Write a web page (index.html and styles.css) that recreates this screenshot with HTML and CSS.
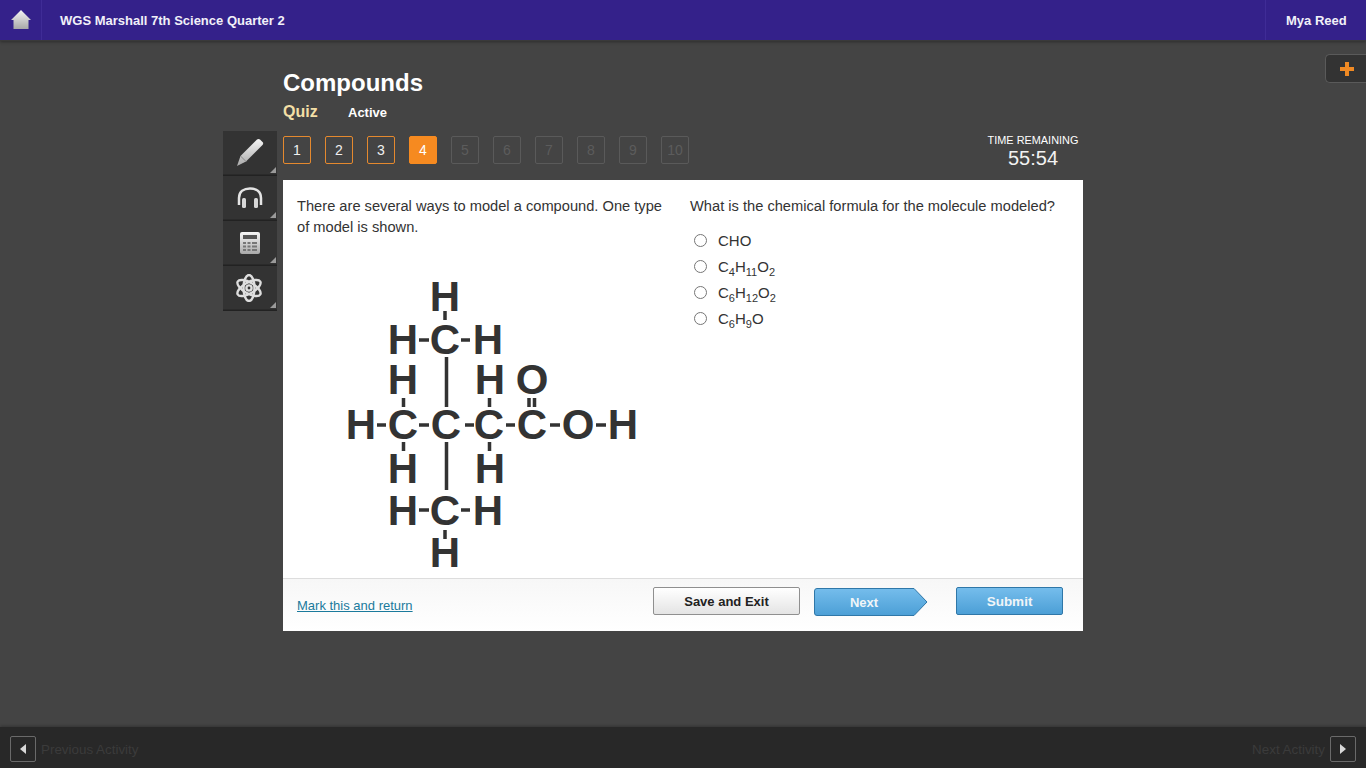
FILE: index.html
```html
<!DOCTYPE html>
<html lang="en">
<head>
<meta charset="utf-8">
<title>Compounds</title>
<link rel="stylesheet" href="styles.css">
</head>
<body>
<header class="topbar">
  <a class="home" aria-label="Home">
    <svg width="22" height="20" viewBox="0 0 22 20">
      <defs><linearGradient id="hg" x1="0" y1="0" x2="0" y2="1"><stop offset="0" stop-color="#f4f4f4"/><stop offset="1" stop-color="#a8a8a8"/></linearGradient></defs>
      <path d="M11 0 L21 10 L18.500 10 L18.500 19 L3.500 19 L3.500 10 L1 10 Z" fill="url(#hg)"/>
    </svg>
  </a>
  <div class="course">WGS Marshall 7th Science Quarter 2</div>
  <div class="user">Mya Reed</div>
</header>

<main class="stage">
  <aside class="tools">
    <div class="tool">
      <svg width="28" height="30" viewBox="0 0 28 30">
        <defs><linearGradient id="tg" x1="0" y1="0" x2="0" y2="1"><stop offset="0" stop-color="#f6f6f6"/><stop offset="1" stop-color="#a9a9a9"/></linearGradient></defs>
        <path d="M21 1.500 Q22.500 .5 24 1.500 L27 4.500 Q27.500 6 26.500 7 L10 23.500 L1 28 L4.500 18 Z" fill="url(#tg)"/>
        <path d="M4.500 18 L10 23.500" stroke="#8a8a8a" stroke-width="1" fill="none"/>
      </svg>
    </div>
    <div class="tool">
      <svg width="28" height="26" viewBox="0 0 28 26">
        <path d="M3 20 V13 C3 6.500 8 3.500 14 3.500 C20 3.500 25 6.500 25 13 V20" fill="none" stroke="#e4e4e4" stroke-width="2.500"/>
        <rect x="6" y="13" width="4" height="10" rx="1.500" fill="#d8d8d8"/>
        <rect x="18" y="13" width="4" height="10" rx="1.500" fill="#d8d8d8"/>
      </svg>
    </div>
    <div class="tool">
      <svg width="24" height="24" viewBox="0 0 24 24">
        <rect x="2" y="1" width="20" height="22" rx="2" fill="url(#tg)"/>
        <rect x="5" y="4" width="14" height="4" fill="#555"/>
        <path d="M5 11h3v2H5zM9.500 11h3v2h-3zM14 11h5v2h-5zM5 14.500h3v2H5zM9.500 14.500h3v2h-3zM14 14.500h5v2h-5zM5 18h3v2H5zM9.500 18h3v2h-3zM14 18h5v2h-5z" fill="#777"/>
      </svg>
    </div>
    <div class="tool">
      <svg width="28" height="28" viewBox="0 0 28 28" fill="none" stroke="#dedede" stroke-width="2.400">
        <ellipse cx="13" cy="14" rx="5.500" ry="13"/>
        <ellipse cx="13" cy="14" rx="5.500" ry="13" transform="rotate(60 13 14)"/>
        <ellipse cx="13" cy="14" rx="5.500" ry="13" transform="rotate(120 13 14)"/>
        <circle cx="13" cy="14" r="2.600" fill="#333"/>
      </svg>
    </div>
  </aside>

  <section class="activity">
    <h1 class="title">Compounds</h1>
    <div class="meta"><span class="kind">Quiz</span><span class="status">Active</span></div>
    <div class="progress">
      <nav class="steps">
        <span class="step done">1</span>
        <span class="step done">2</span>
        <span class="step done">3</span>
        <span class="step current">4</span>
        <span class="step">5</span>
        <span class="step">6</span>
        <span class="step">7</span>
        <span class="step">8</span>
        <span class="step">9</span>
        <span class="step">10</span>
      </nav>
      <div class="timer">
        <div class="timer-label">TIME REMAINING</div>
        <div class="timer-value">55:54</div>
      </div>
    </div>

    <div class="card">
      <div class="columns">
        <div class="col-left">
          <p class="prompt">There are several ways to model a compound. One type of model is shown.</p>
          <svg class="molecule" width="310" height="310" viewBox="340 270 310 310">
            <g class="atoms" text-anchor="middle">
              <text x="445" y="311">H</text>
              <text x="403" y="354">H</text><text x="445" y="354">C</text><text x="488" y="354">H</text>
              <text x="403" y="394">H</text><text x="490" y="394">H</text><text x="532" y="394">O</text>
              <text x="361" y="439">H</text><text x="403" y="439">C</text><text x="446" y="439">C</text><text x="489" y="439">C</text><text x="532" y="439">C</text><text x="578" y="439">O</text><text x="623" y="439">H</text>
              <text x="403" y="483">H</text><text x="490" y="483">H</text>
              <text x="403" y="525">H</text><text x="445" y="525">C</text><text x="488" y="525">H</text>
              <text x="445" y="567">H</text>
            </g>
            <g class="bonds">
              <path d="M445 311V320M446.500 357V407M446.500 442V490M445 530V539"/>
              <path d="M403.500 398V407M403.500 442V451M489.500 398V407M489.500 442V451"/>
              <path d="M529 398V407M534.500 398V407"/>
              <path d="M419 340H429M461 340H470M419 510H429M461 510H470"/>
              <path d="M377 425H386M419 425H429M465 425H474M506 425H515M550 425H560M596 425H606"/>
            </g>
          </svg>
        </div>
        <div class="col-right">
          <p class="prompt">What is the chemical formula for the molecule modeled?</p>
          <ul class="answers">
            <li class="answer"><input class="radio" type="radio" name="a"><label>CHO</label></li>
            <li class="answer"><input class="radio" type="radio" name="a"><label>C<sub>4</sub>H<sub>11</sub>O<sub>2</sub></label></li>
            <li class="answer"><input class="radio" type="radio" name="a"><label>C<sub>6</sub>H<sub>12</sub>O<sub>2</sub></label></li>
            <li class="answer"><input class="radio" type="radio" name="a"><label>C<sub>6</sub>H<sub>9</sub>O</label></li>
          </ul>
        </div>
      </div>
      <div class="card-foot">
        <a class="mark">Mark this and return</a>
        <div class="actions">
          <button class="btn btn-plain">Save and Exit</button>
          <button class="btn-next">
            <svg class="next-shape" width="114" height="28" viewBox="0 0 114 28">
              <defs><linearGradient id="bg" x1="0" y1="0" x2="0" y2="1"><stop offset="0" stop-color="#75bdec"/><stop offset="1" stop-color="#4c9fd6"/></linearGradient></defs>
              <path d="M3 .5 H100 L113 14 L100 27.500 H3 Q.5 27.500 .5 25 V3 Q.5 .5 3 .5 Z" fill="url(#bg)" stroke="#2f77a8"/>
            </svg>
            <span class="next-label">Next</span>
          </button>
          <button class="btn btn-blue">Submit</button>
        </div>
      </div>
    </div>
  </section>

  <aside class="side-right">
    <button class="plus" aria-label="Expand">
      <svg width="14" height="14" viewBox="0 0 14 14"><path d="M5 0h4v5h5v4H9v5H5V9H0V5h5z" fill="#f08a24"/></svg>
    </button>
  </aside>
</main>

<footer class="bottombar">
  <div class="nav-item">
    <span class="nav-btn"><svg width="8" height="10" viewBox="0 0 8 10"><path d="M7 0V10L1 5Z" fill="#d8d8d8"/></svg></span>
    <span class="nav-text">Previous Activity</span>
  </div>
  <div class="nav-item">
    <span class="nav-text">Next Activity</span>
    <span class="nav-btn"><svg width="8" height="10" viewBox="0 0 8 10"><path d="M1 0V10L7 5Z" fill="#d8d8d8"/></svg></span>
  </div>
</footer>
</body>
</html>
```

FILE: styles.css
```css
* { box-sizing: border-box; }
html, body { height: 100%; }
body {
  margin: 0;
  height: 768px;
  overflow: hidden;
  display: flex;
  flex-direction: column;
  background: #444;
  color: #333;
  font-family: "Liberation Sans", Arial, sans-serif;
}

.topbar {
  flex: none;
  height: 41px;
  display: flex;
  align-items: stretch;
  background: #34218a;
  border-bottom: 1px solid #3a3a3a;
  box-shadow: 0 1px 3px rgba(0,0,0,.35);
  color: #f1f0f8;
  font-size: 13px;
  font-weight: bold;
}
.home {
  width: 42px;
  display: flex;
  align-items: center;
  justify-content: center;
  border-right: 1px solid #3f2c96;
}
.course { flex: 1; padding-left: 18px; line-height: 41px; }
.user {
  width: 101px;
  padding-left: 20px;
  line-height: 41px;
  border-left: 1px solid #3f2c96;
}

.stage {
  flex: 1;
  min-height: 0;
  display: grid;
  grid-template-columns: 1fr 800px 1fr;
}

.tools {
  justify-self: end;
  width: 54px;
  margin-right: 6px;
  margin-top: 90px;
}
.tool {
  position: relative;
  height: 45px;
  display: flex;
  align-items: center;
  justify-content: center;
  background: #333;
  border-bottom: 1px solid #222;
  box-shadow: inset 0 -1px 0 #2a2a2a;
}
.tool::after {
  content: "";
  position: absolute;
  right: 1px;
  bottom: 2px;
  border-style: solid;
  border-width: 0 0 6px 6px;
  border-color: transparent transparent #9a9a9a transparent;
}

.activity { min-width: 0; }
.title {
  margin: 28px 0 0;
  font-size: 24px;
  line-height: 28px;
  font-weight: bold;
  color: #fff;
}
.meta {
  display: flex;
  align-items: baseline;
  margin-top: 6px;
  height: 20px;
}
.kind { font-size: 16px; font-weight: bold; color: #f3dfa6; width: 65px; }
.status { font-size: 13px; font-weight: bold; color: #fff; }

.progress {
  display: flex;
  justify-content: space-between;
  height: 44px;
  margin-top: 13px;
}
.steps { display: flex; gap: 14px; }
.step {
  width: 28px;
  height: 28px;
  display: flex;
  align-items: center;
  justify-content: center;
  border: 1px solid #5a5a5a;
  border-radius: 2px;
  color: #5c5c5c;
  font-size: 14px;
}
.step.done { border-color: #e5892e; color: #f0f0f0; }
.step.current { background: #f68a20; border-color: #f68a20; color: #fff; }

.timer { width: 100px; margin-top: -3px; color: #fff; text-align: center; }
.timer-label { font-size: 10.900px; line-height: 14px; white-space: nowrap; }
.timer-value { font-size: 20px; line-height: 22px; color: #f2f2f2; }

.card { height: 451px; background: #fff; display: flex; flex-direction: column; }
.columns { flex: 1; min-height: 0; display: flex; padding: 16px 14px 0; }
.col-left { width: 393px; padding-right: 20px; }
.col-right { flex: 1; }
.prompt { margin: 0; font-size: 14.667px; line-height: 21px; color: #333; }
.left-gap { margin: 0; }
.molecule { display: block; margin: 32px 0 0 43px; }
.atoms text {
  font-family: "Liberation Sans", Arial, sans-serif;
  font-size: 42px;
  font-weight: bold;
  fill: #333;
}
.bonds path { fill: none; stroke: #333; stroke-width: 3.500; }

.answers { list-style: none; margin: 10px 0 0; padding: 0; }
.answer { display: flex; align-items: center; height: 26px; font-size: 15px; color: #333; }
.radio { width: 13px; height: 13px; margin: 3px 11px 3px 4px; flex: none; }
.answer sub { font-size: 11px; line-height: 0; vertical-align: -4px; }

.card-foot {
  flex: none;
  height: 53px;
  display: flex;
  align-items: center;
  justify-content: space-between;
  padding: 0 20px 0 14px;
  border-top: 1px solid #ddd;
  background: linear-gradient(#f7f7f7, #fff);
}
.mark { margin-top: 1px; font-size: 13px; color: #1a7a9c; text-decoration: underline; }
.actions { display: flex; align-items: flex-start; gap: 14px; margin-bottom: 7px; }
.btn {
  height: 28px;
  padding: 1px 0 0;
  border-radius: 2px;
  font-family: inherit;
  font-size: 13px;
  font-weight: bold;
}
.btn-plain {
  width: 147px;
  border: 1px solid #8f8f8f;
  background: linear-gradient(#fff, #e4e4e4);
  color: #222;
}
.btn-blue {
  width: 107px;
  margin-left: 14px;
  border: 1px solid #2f77a8;
  background: linear-gradient(#75bdec, #4c9fd6);
  color: #f0f5f8;
  font-size: 13.500px;
}
.btn-next {
  position: relative;
  width: 114px;
  height: 28px;
  margin-top: 1px;
  padding: 0 14px 0 0;
  border: 0;
  background: none;
  font-family: inherit;
  font-size: 13px;
  font-weight: bold;
  color: #f0f5f8;
}
.next-shape { position: absolute; left: 0; top: 0; }
.next-label { position: relative; }

.side-right { margin-top: 13px; display: flex; justify-content: flex-end; align-items: flex-start; }
.plus {
  width: 41px;
  height: 29px;
  padding: 0 0 0 1px;
  display: flex;
  align-items: center;
  justify-content: center;
  background: #333;
  border: 1px solid #5a5a5a;
  border-right: 0;
  border-radius: 5px 0 0 5px;
}

.bottombar {
  flex: none;
  height: 41px;
  display: flex;
  justify-content: space-between;
  align-items: center;
  padding: 0 10px;
  background: #282828;
  box-shadow: 0 -1px 3px rgba(0,0,0,.25);
}
.nav-item { display: flex; align-items: center; gap: 5px; margin-top: 3px; }
.nav-btn {
  width: 26px;
  height: 26px;
  display: flex;
  align-items: center;
  justify-content: center;
  border: 1px solid #6a6a6a;
  border-radius: 2px;
}
.nav-text { font-size: 13.400px; color: #3b3b3b; }
```
